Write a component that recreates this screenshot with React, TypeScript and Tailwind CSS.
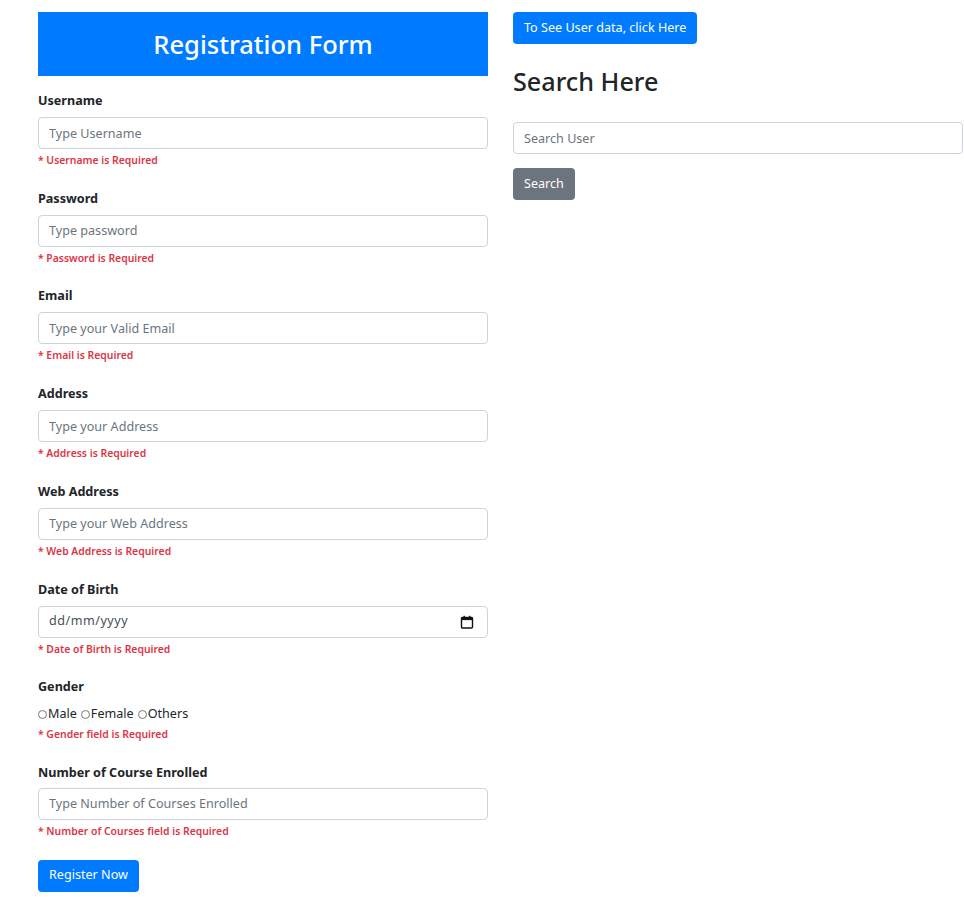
import React from "react";

const fields = [
  { label: "Username", placeholder: "Type Username", error: "* Username is Required" },
  { label: "Password", placeholder: "Type password", error: "* Password is Required" },
  { label: "Email", placeholder: "Type your Valid Email", error: "* Email is Required" },
  { label: "Address", placeholder: "Type your Address", error: "* Address is Required" },
  { label: "Web Address", placeholder: "Type your Web Address", error: "* Web Address is Required" },
];

function Label({ children }: { children: React.ReactNode }) {
  return <div className="text-[12.6px] leading-5 font-bold text-[#212529]">{children}</div>;
}

function ErrorText({ children, tight }: { children: React.ReactNode; tight?: boolean }) {
  return (
    <div
      className={
        (tight ? "mt-[3px] " : "mt-[4px] ") +
        "text-[10.4px] leading-[15.7px] font-semibold text-[#dc3545]"
      }
    >
      {children}
    </div>
  );
}

function TextInput({ placeholder }: { placeholder: string }) {
  return (
    <input
      type="text"
      placeholder={placeholder}
      className="block h-8 w-full rounded border border-[#ced4da] bg-white px-[10px] text-[12.6px] text-[#495057] placeholder-[#6c757d] outline-none"
    />
  );
}

function CalendarIcon() {
  return (
    <svg width="14" height="14" viewBox="0 0 14 14" fill="none">
      <rect x="1.5" y="2.5" width="11" height="10.5" rx="1" stroke="#111" strokeWidth="1.4" />
      <rect x="1.5" y="2.5" width="11" height="2.6" fill="#111" />
      <rect x="3.5" y="0.8" width="1.4" height="2.4" fill="#111" />
      <rect x="9.1" y="0.8" width="1.4" height="2.4" fill="#111" />
    </svg>
  );
}

function Radio({ label }: { label: string }) {
  return (
    <label className="flex items-center">
      <span className="mr-px inline-block h-[9px] w-[9px] rounded-full border border-[#767676] bg-white" />
      <span>{label}</span>
    </label>
  );
}

export default function App() {
  return (
    <div className="flex gap-[25px] bg-white pl-[38px] pt-3 font-['Noto_Sans','Segoe_UI',sans-serif] text-[#212529]">
      <div className="w-[450px] shrink-0 pb-2">
        <div className="flex h-16 items-center justify-center bg-[#007bff] text-[25.5px] font-medium text-white">
          Registration Form
        </div>

        <form className="mt-[15px] flex flex-col gap-5" onSubmit={(e) => e.preventDefault()}>
          {fields.map((f) => (
            <div key={f.label}>
              <Label>{f.label}</Label>
              <div className="mt-[6px]">
                <TextInput placeholder={f.placeholder} />
              </div>
              <ErrorText>{f.error}</ErrorText>
            </div>
          ))}

          <div>
            <Label>Date of Birth</Label>
            <div className="mt-[6px] flex h-8 items-center justify-between rounded border border-[#ced4da] bg-white pl-[10px] pr-[13px] text-[12.6px] text-[#495057]">
              <span className="tracking-[0.5px]">dd/mm/yyyy</span>
              <CalendarIcon />
            </div>
            <ErrorText>* Date of Birth is Required</ErrorText>
          </div>

          <div>
            <Label>Gender</Label>
            <div className="mt-[7px] flex h-5 items-center gap-1 text-[12.6px] text-[#212529]">
              <Radio label="Male" />
              <Radio label="Female" />
              <Radio label="Others" />
            </div>
            <ErrorText tight>* Gender field is Required</ErrorText>
          </div>

          <div>
            <Label>Number of Course Enrolled</Label>
            <div className="mt-[5px]">
              <TextInput placeholder="Type Number of Courses Enrolled" />
            </div>
            <ErrorText>* Number of Courses field is Required</ErrorText>
          </div>

          <div>
            <button
              type="submit"
              className="h-8 rounded bg-[#007bff] px-[11px] text-[12.6px] text-white"
            >
              Register Now
            </button>
          </div>
        </form>
      </div>

      <div className="w-[450px] shrink-0">
        <button className="h-8 rounded bg-[#007bff] px-[11px] text-[12.6px] text-white">
          To See User data, click Here
        </button>
        <h2 className="mt-[21px] text-[25.2px] leading-[32px] font-medium text-[#212529]">Search Here</h2>
        <div className="mt-[25px]">
          <TextInput placeholder="Search User" />
        </div>
        <button className="mt-[14px] h-8 rounded bg-[#6c757d] px-[11px] text-[12.6px] text-white">
          Search
        </button>
      </div>
    </div>
  );
}
